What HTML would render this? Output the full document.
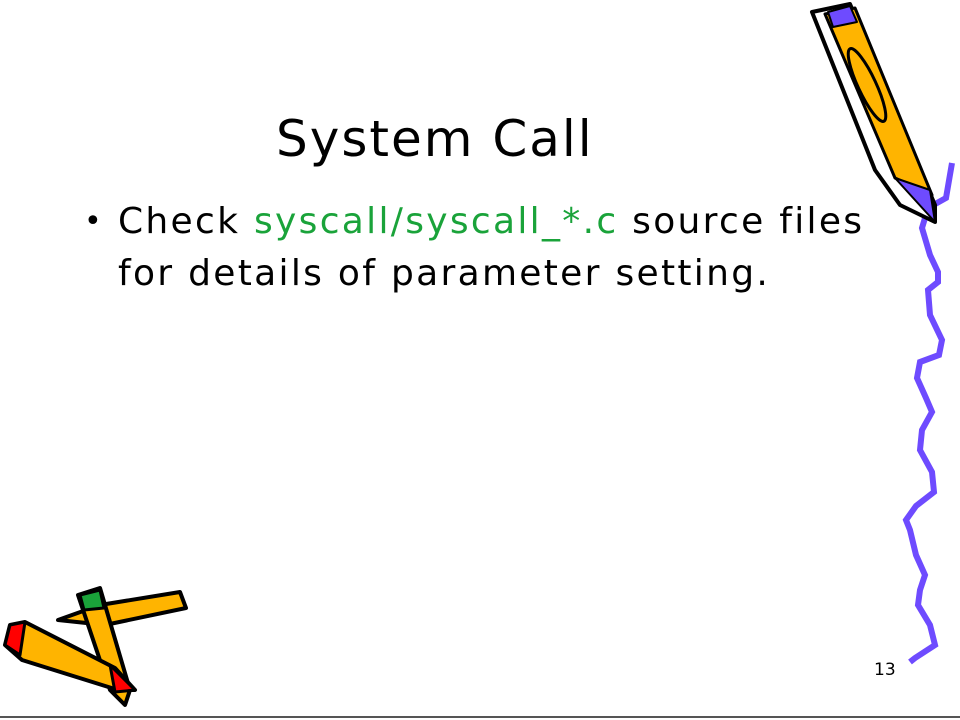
<!DOCTYPE html>
<html><head><meta charset="utf-8"><style>
html,body{margin:0;padding:0;background:#fff}
body{width:960px;height:720px;position:relative;overflow:hidden;font-family:"DejaVu Sans","Liberation Sans",sans-serif}
.t{position:absolute;left:276px;top:110px;font-size:50px;color:#000;letter-spacing:2px;white-space:nowrap}
.b{position:absolute;left:118px;top:196px;font-size:36px;line-height:52px;color:#000;letter-spacing:2.3px;white-space:nowrap}
.dot{position:absolute;left:84px;top:196px;font-size:30px;line-height:52px}
.g{color:#1aa33a}
.n{position:absolute;left:874px;top:660px;font-size:17px}
.line{position:absolute;left:0;top:716px;width:960px;height:2px;background:#555}
</style></head><body>
<div class="t">System Call</div>
<div class="dot">•</div>
<div class="b">Check <span class="g">syscall/syscall_*.c</span> source files<br>for details of parameter setting.</div>
<div class="n">13</div>
<div class="line"></div>
<svg width="960" height="720" style="position:absolute;left:0;top:0">
<polyline fill="none" stroke="#6e4bff" stroke-width="6" points="952,163 946,198 928,208 922,228 930,255 938,272 938,282 928,290 930,315 942,340 939,355 920,362 917,378 926,398 932,412 922,430 920,450 932,472 934,492 916,506 906,520 910,530 916,555 925,575 920,590 918,605 930,625 935,645 915,658 910,662"/>
<g stroke="#000" stroke-linejoin="round">
<polygon points="812,12 850,4 935,205 935,222 900,205 875,170" fill="#fff" stroke-width="4"/>
<polygon points="825,14 855,8 932,195 895,178" fill="#ffb400" stroke-width="3"/>
<polygon points="828,12 850,6 857,22 833,27" fill="#6e4bff" stroke-width="2"/>
<polygon points="895,178 930,190 935,222" fill="#6e4bff" stroke-width="2"/>
<ellipse cx="867" cy="85" rx="9" ry="40" transform="rotate(-25 867 85)" fill="none" stroke-width="3"/>
</g>
<g stroke="#000" stroke-width="4" stroke-linejoin="round">
<polygon points="58,620 100,605 180,592 186,608 105,625" fill="#ffb400"/>
<polygon points="78,595 100,588 130,690 125,705 110,690" fill="#ffb400"/>
<polygon points="80,595 100,590 104,608 84,610" fill="#1aa33a" stroke-width="3"/>
<polygon points="10,625 25,622 115,668 135,690 118,690 22,660 5,645" fill="#ffb400"/>
<polygon points="10,625 25,622 20,655 5,645" fill="#f00" stroke-width="3"/>
<polygon points="110,665 135,690 115,692" fill="#f00" stroke-width="3"/>
</g>
</svg>
</body></html>
